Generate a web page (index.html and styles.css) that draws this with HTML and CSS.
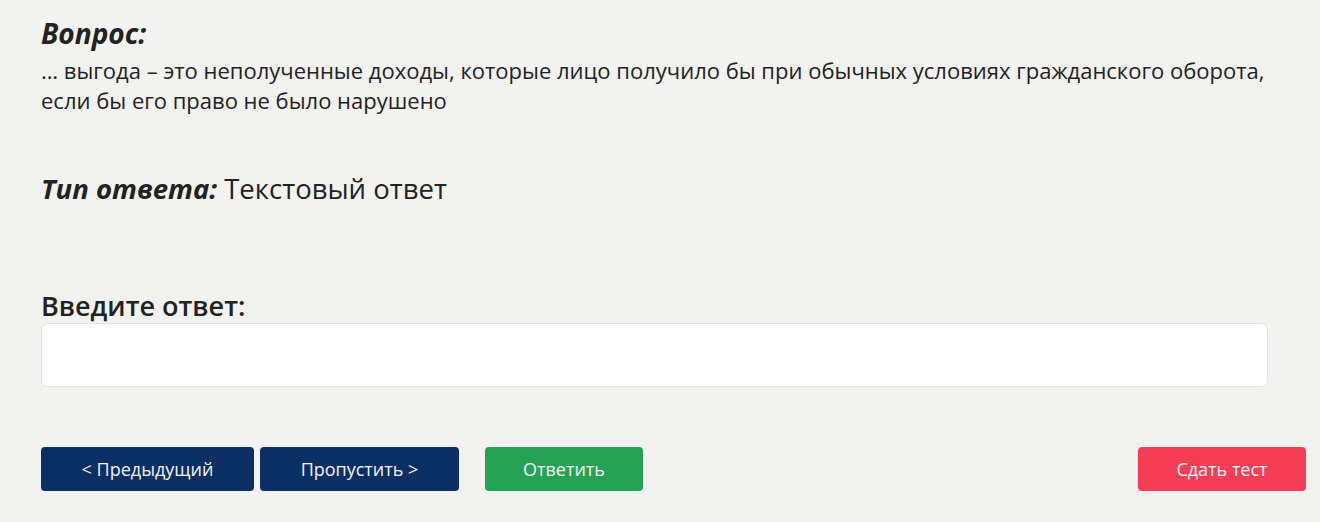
FILE: index.html
```html
<!DOCTYPE html>
<html lang="ru">
<head>
  <meta charset="utf-8"/>
  <title>Тест</title>
  <link rel="stylesheet" href="styles.css">
</head>
<body>
	<div class="quiz">
		<div class="question">
			<h2 class="label">Вопрос:</h2>
			<p class="question-text">… выгода – это неполученные доходы, которые лицо получило бы при обычных условиях гражданского оборота, если бы его право не было нарушено</p>
		</div>

		<div class="answer-type">
			<span class="label">Тип ответа:</span> Текстовый ответ
		</div>

		<form class="answer">
			<label for="txtAnswer">Введите ответ:</label>
			<input type="text" id="txtAnswer" class="answer-input">

			<div class="buttons">
				<button type="button" class="btn btn-nav btn-prev">&lt; Предыдущий</button>
				<button type="button" class="btn btn-nav btn-skip">Пропустить &gt;</button>
				<button type="button" class="btn btn-answer">Ответить</button>
				<button type="button" class="btn btn-finish">Сдать тест</button>
			</div>
		</form>
	</div> <!-- class=quiz -->
</body>
</html>
```

FILE: styles.css
```css
	body {
		margin: 0;
		background-color: #f2f2f1;
		color: #222222;
		font-family: "Open Sans", "Noto Sans", sans-serif;
	}

	.quiz {
		padding: 14px 14px 0 41px;
	}

	.label {
		font-style: italic;
		font-weight: 700;
	}

	h2.label {
		margin: 0;
		font-size: 28px;
		line-height: 38px;
	}

	.question-text {
		margin: 3px 0 0 0;
		font-size: 22px;
		line-height: 30px;
		padding-right: 20px;
	}

	.answer-type {
		margin-top: 55px;
		font-size: 27.5px;
		line-height: 38px;
	}

	.answer {
		margin-top: 81px;
	}

	.answer label {
		display: block;
		font-size: 27px;
		font-weight: 600;
		line-height: 34px;
	}

	.answer-input {
		display: block;
		box-sizing: border-box;
		width: calc(100% - 38px);
		height: 64px;
		margin: 0;
		border: 1px solid #e2e2e0;
		border-radius: 6px;
		background: #ffffff;
	}

	.buttons {
		display: flex;
		margin-top: 60px;
	}

	.btn {
		height: 44px;
		border: 0;
		border-radius: 4px;
		color: #f4f4f8;
		font-family: "Open Sans", "Noto Sans", sans-serif;
		font-size: 18px;
	}

	.btn-nav {
		background-color: #0b2e64;
	}

	.btn-prev {
		width: 213px;
	}

	.btn-skip {
		width: 199px;
		margin-left: 6px;
	}

	.btn-answer {
		width: 158px;
		margin-left: 26px;
		background-color: #26a255;
	}

	.btn-finish {
		width: 168px;
		margin-left: auto;
		background-color: #f53e55;
	}
```
